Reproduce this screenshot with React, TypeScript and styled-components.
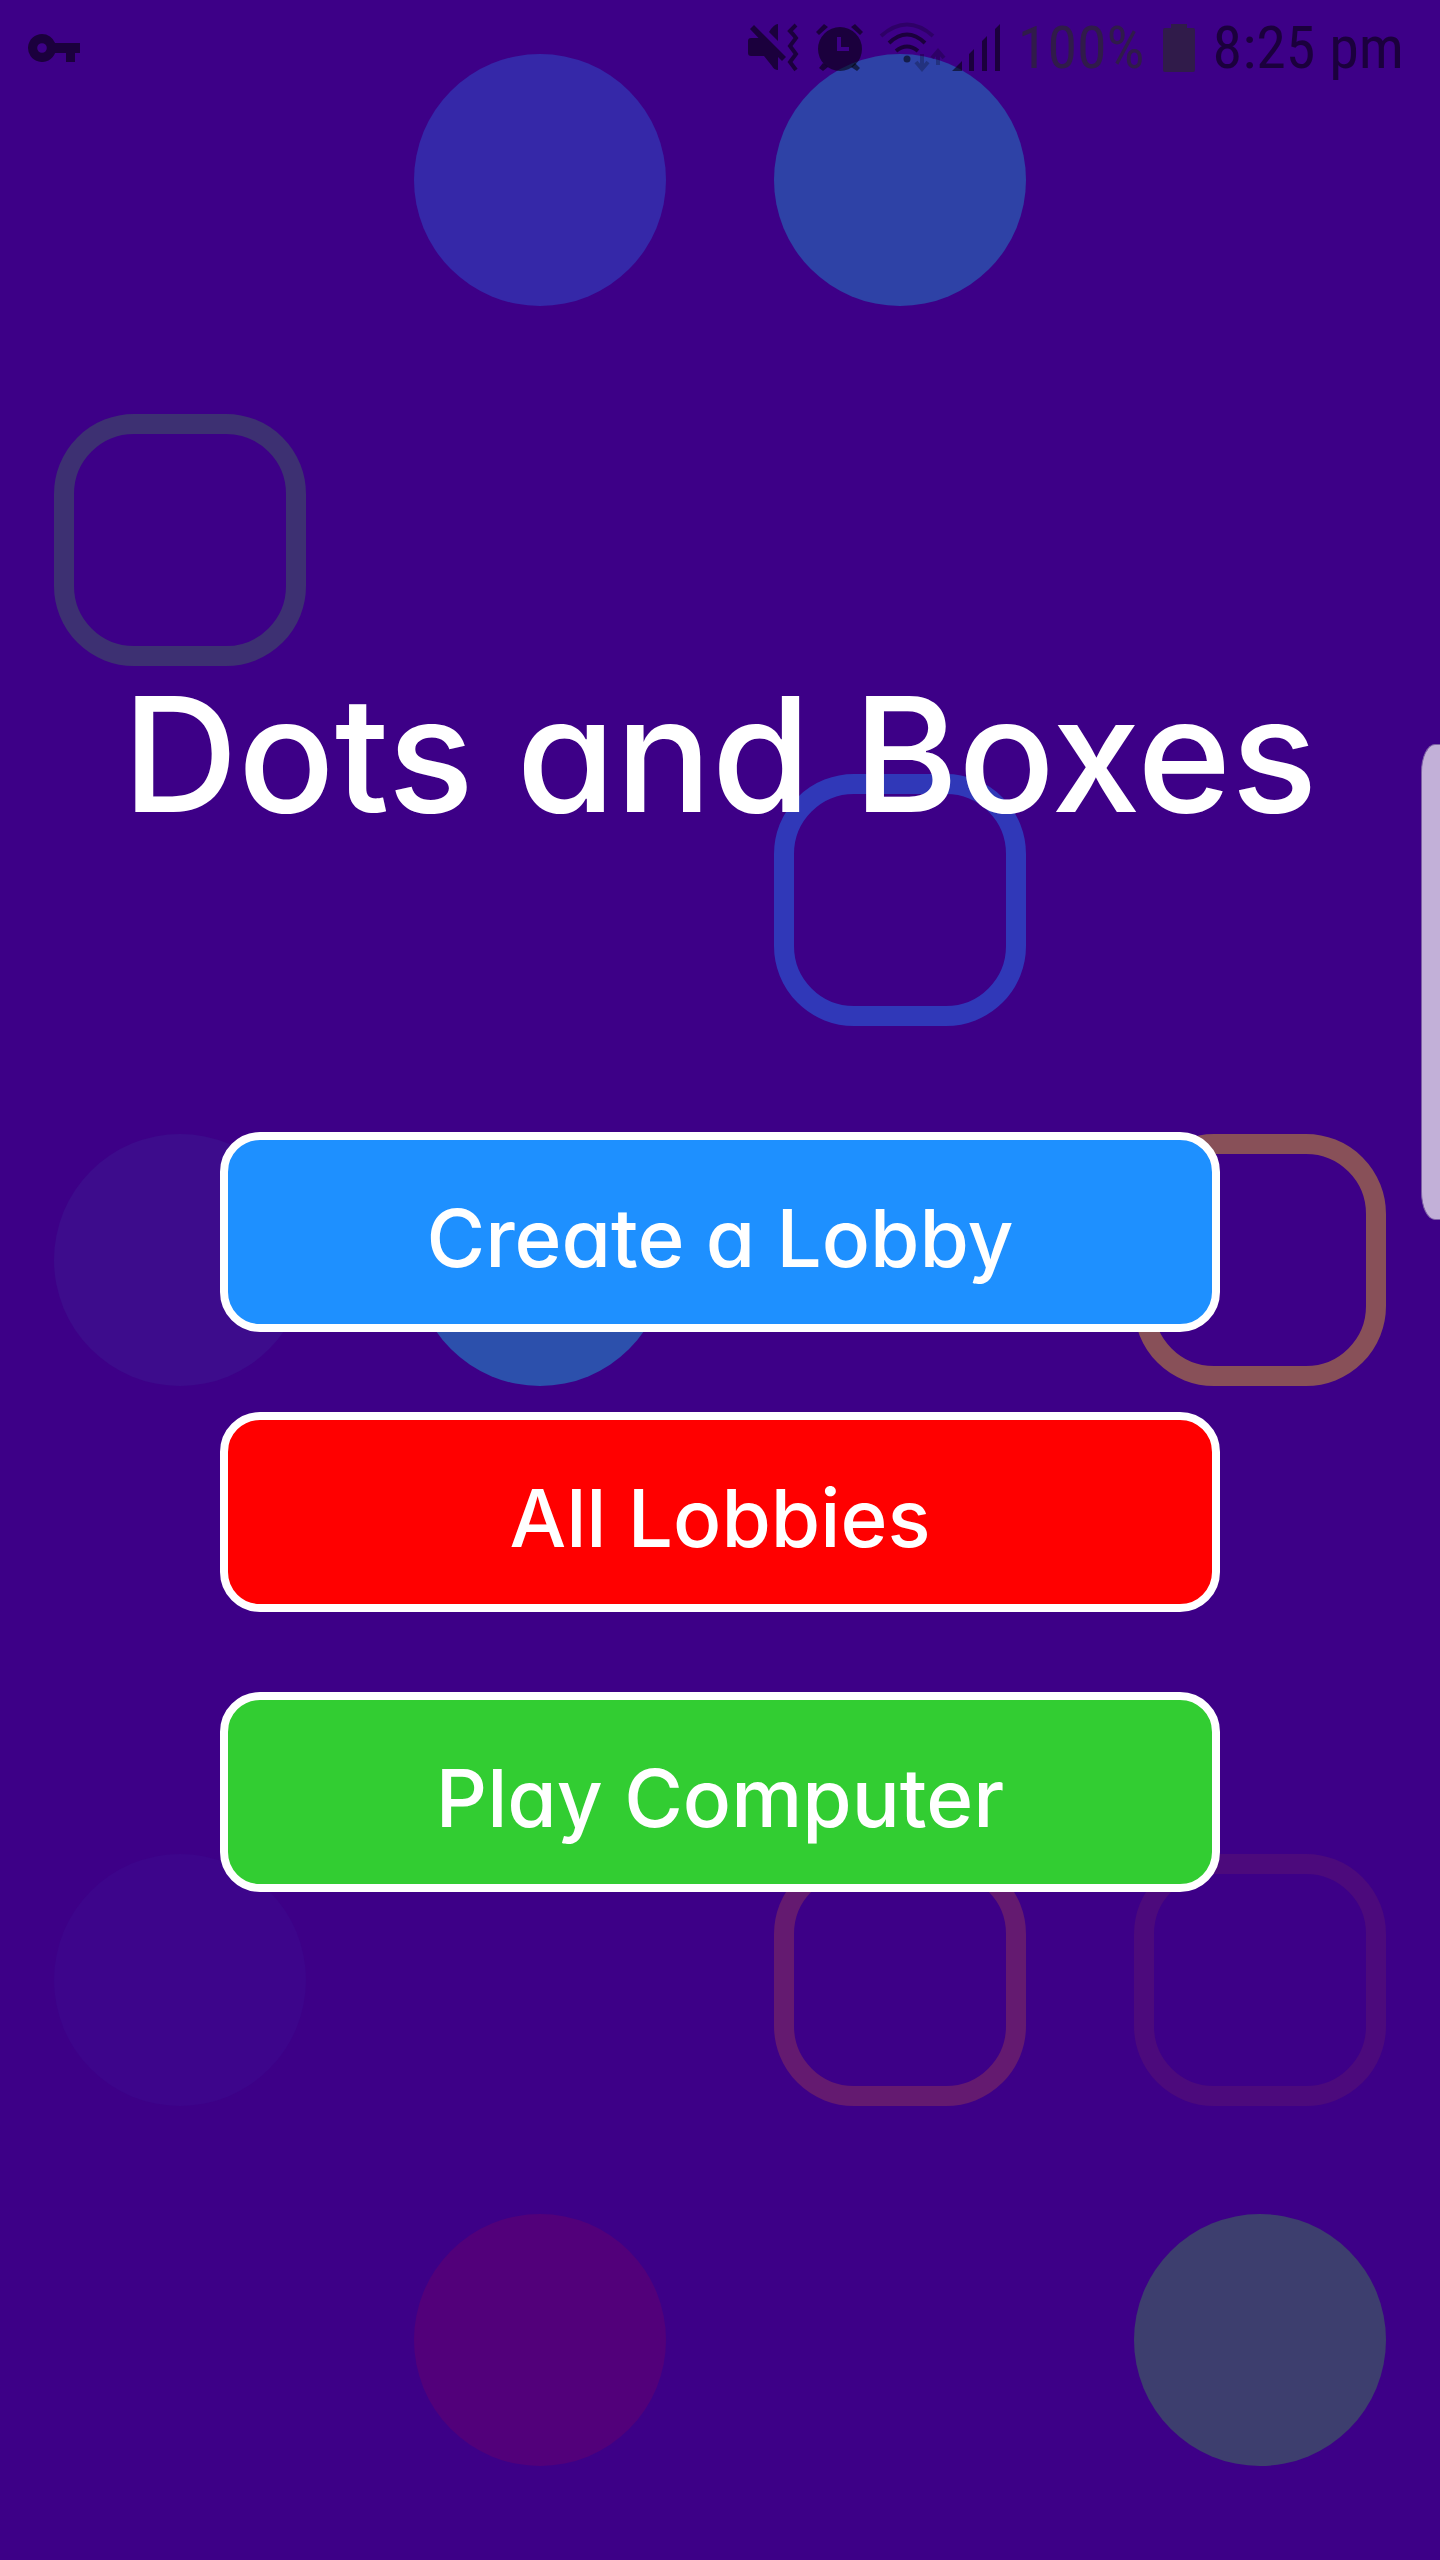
import React from "react";
import styled, { createGlobalStyle } from "styled-components";

const GlobalStyle = createGlobalStyle`
  *, *::before, *::after { box-sizing: border-box; }
  body {
    margin: 0;
    background: #3d0087;
    font-family: Inter, "Open Sans", sans-serif;
    font-feature-settings: "cv11";
  }
`;

const Page = styled.div`
  position: relative;
  min-height: 100vh;
  overflow: hidden;
  display: flex;
  flex-direction: column;
  background: #3d0087;
  color: #fff;
`;

const Board = styled.div`
  position: absolute;
  inset: 0;
  display: grid;
  grid-template-columns: repeat(4, 1fr);
  grid-auto-rows: 25vw;
  place-items: center;
  overflow: hidden;
`;

const Dot = styled.span<{ $row: number; $col: number; $tone: string }>`
  grid-row: ${(p) => p.$row};
  grid-column: ${(p) => p.$col};
  width: 70%;
  aspect-ratio: 1;
  border-radius: 50%;
  background: ${(p) => p.$tone};
`;

const Box = styled(Dot)`
  border: 20px solid ${(p) => p.$tone};
  border-radius: 80px;
  background: none;
`;

const StatusBar = styled.header`
  position: relative;
  display: flex;
  align-items: center;
  height: 96px;
  padding: 0 36px 0 28px;
  color: rgba(0, 0, 0, 0.55);
  font-family: "Roboto Condensed", Roboto, sans-serif;
  font-size: 60px;
  line-height: 60px;
`;

const StatusGroup = styled.div`
  display: flex;
  align-items: center;
  gap: 18px;
  margin-left: auto;
`;

const Icons = styled.div`
  display: flex;
  gap: 16px;

  svg {
    overflow: visible;
  }
`;

const Faded = styled.span`
  color: rgba(41, 41, 41, 0.65);
`;

const Main = styled.main`
  position: relative;
  display: flex;
  flex-direction: column;
  align-items: center;
  gap: 278px;
  padding: 558px 24px 80px;
`;

const Title = styled.h1`
  margin: 0;
  font-size: 160px;
  font-weight: 500;
  line-height: 200px;
  text-align: center;
`;

const Menu = styled.nav`
  display: flex;
  flex-direction: column;
  gap: 80px;
  width: 1000px;
  max-width: 100%;
`;

const MenuButton = styled.button<{ $fill: string }>`
  height: 200px;
  padding: 12px 0 0;
  border: 8px solid #fff;
  border-radius: 40px;
  background: ${(p) => p.$fill};
  color: #fff;
  font: inherit;
  font-feature-settings: inherit;
  font-size: 80px;
  font-weight: 500;
  line-height: 100px;
  cursor: pointer;
`;

const EdgeHandle = styled.div`
  position: absolute;
  top: 744px;
  right: 0;
  width: 19px;
  height: 476px;
  border: 1px solid #7d5fa5;
  border-right: 0;
  border-radius: 14px 0 0 14px / 28px 0 0 28px;
  background: #c2b0d8;
`;

const dots = [
  { row: 1, col: 2, tone: "#3528a8" },
  { row: 1, col: 3, tone: "#2e42a6" },
  { row: 4, col: 1, tone: "#3d0c8c" },
  { row: 4, col: 2, tone: "#2c50ac" },
  { row: 6, col: 1, tone: "#3d058b" },
  { row: 7, col: 2, tone: "#52007a" },
  { row: 7, col: 4, tone: "#3d3e6e" },
];

const boxes = [
  { row: 2, col: 1, tone: "#3d3072" },
  { row: 3, col: 3, tone: "#3038b8" },
  { row: 4, col: 4, tone: "#885058" },
  { row: 6, col: 3, tone: "#641a70" },
  { row: 6, col: 4, tone: "#4c0a7c" },
];

const choices = [
  { label: "Create a Lobby", fill: "#1e90ff" },
  { label: "All Lobbies", fill: "#ff0000" },
  { label: "Play Computer", fill: "#32cd32" },
];

const KeyIcon = () => (
  <svg width="52" height="28" viewBox="0 0 52 28" fill="currentColor" aria-hidden="true">
    <path fillRule="evenodd" d="M14 0a14 14 0 0 1 13.1 9H52v10h-5v9h-9v-9H27.1A14 14 0 1 1 14 0Zm0 9.2a4.800 4.800 0 1 0 0 9.600 4.800 4.800 0 0 0 0-9.600Z" />
  </svg>
);

const MuteIcon = () => (
  <svg width="52" height="48" viewBox="0 0 52 48" fill="currentColor" aria-hidden="true">
    <path d="M30 0v17l-9-9q5-8 9-8zM0 17q0-3 3-3h7.500L2 5l4-4 32 32-4 4-4-4v13q-4 0-6-4L16 32H3q-3 0-3-3z" />
    <path d="m48 1q-4 4-6 6 3 3 6 7-3 4-6 8 3 4 6 8-3 4-6 8l6 8" fill="none" stroke="currentColor" strokeWidth="4" />
  </svg>
);

const AlarmIcon = () => (
  <svg width="48" height="48" viewBox="0 0 48 48" fill="currentColor" aria-hidden="true">
    <path d="m0 8 8-8 4 3-9 8zM47 8l-8-8-4 3 9 8zM7 39l5 4-5 4-4-3zM39 39l-4 4 6 4 3-3z" />
    <path fillRule="evenodd" d="M24 3a22 22 0 1 1 0 44 22 22 0 0 1 0-44Zm-3 10v14h12v-4h-8V13Z" />
  </svg>
);

const WifiIcon = () => (
  <svg width="56" height="48" viewBox="0 0 56 48" fill="none" stroke="currentColor" strokeWidth="4" aria-hidden="true">
    <path d="M1 12Q27-11 53 12" opacity=".42" />
    <path d="M9 19Q27 2 45 19M16 27q11-9 22 0" />
    <circle cx="27" cy="35" r="3.500" fill="currentColor" stroke="none" />
    <path d="M42 30v14m-6-6 6 7 6-7M58 41V28m-6 6 6-7 6 7" opacity=".42" />
  </svg>
);

const SignalIcon = () => (
  <svg width="48" height="48" viewBox="0 0 48 48" fill="currentColor" aria-hidden="true">
    <path d="M0 47 10 37v10zM17 30l5-5v22h-5zM30 17l5-5v35h-5zM43 5l5-5v47h-5z" />
  </svg>
);

const BatteryIcon = () => (
  <svg width="32" height="48" viewBox="0 0 32 48" fill="rgba(41,41,41,.65)" aria-hidden="true">
    <path d="M8 0h16v4h6q2 0 2 2v40q0 2-2 2H2q-2 0-2-2V6q0-2 2-2h6z" />
  </svg>
);

export default function App() {
  return (
    <Page>
      <GlobalStyle />
      <Board aria-hidden="true">
        {dots.map((d) => (
          <Dot key={`${d.row}-${d.col}`} $row={d.row} $col={d.col} $tone={d.tone} />
        ))}
        {boxes.map((b) => (
          <Box key={`${b.row}-${b.col}`} $row={b.row} $col={b.col} $tone={b.tone} />
        ))}
      </Board>
      <StatusBar>
        <KeyIcon />
        <StatusGroup>
          <Icons>
            <MuteIcon />
            <AlarmIcon />
            <WifiIcon />
            <SignalIcon />
          </Icons>
          <Faded>100%</Faded>
          <BatteryIcon />
          <span>8:25 pm</span>
        </StatusGroup>
      </StatusBar>
      <Main>
        <Title>Dots and Boxes</Title>
        <Menu>
          {choices.map((c) => (
            <MenuButton key={c.label} type="button" $fill={c.fill}>
              {c.label}
            </MenuButton>
          ))}
        </Menu>
      </Main>
      <EdgeHandle />
    </Page>
  );
}
